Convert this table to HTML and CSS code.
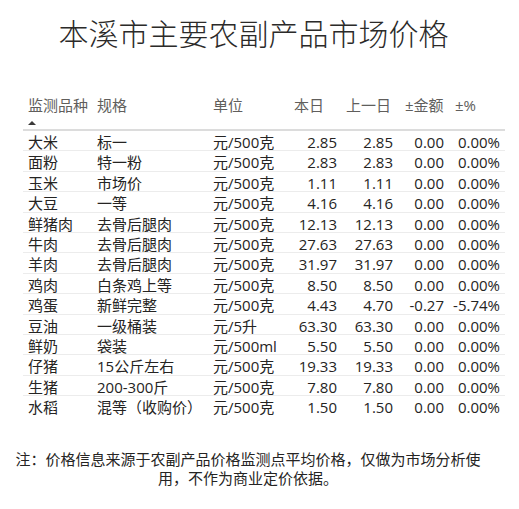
FILE: index.html
```html
<!DOCTYPE html>
<html lang="zh-CN">
<head>
<meta charset="utf-8">
<title>本溪市主要农副产品市场价格</title>
<link rel="stylesheet" href="styles.css">
</head>
<body>
<div class="page">
  <h1 class="title">本溪市主要农副产品市场价格</h1>
  <div class="grid">
    <div class="row head">
      <div class="c"><span>监测品种</span><i class="sort"></i></div>
      <div class="c">规格</div>
      <div class="c">单位</div>
      <div class="c">本日</div>
      <div class="c">上一日</div>
      <div class="c">±金额</div>
      <div class="c">±%</div>
    </div>
    <div class="row"><div class="c">大米</div><div class="c">标一</div><div class="c">元/500克</div><div class="c n n4">2.85</div><div class="c n n5">2.85</div><div class="c n n6">0.00</div><div class="c n n7">0.00%</div></div>
    <div class="row"><div class="c">面粉</div><div class="c">特一粉</div><div class="c">元/500克</div><div class="c n n4">2.83</div><div class="c n n5">2.83</div><div class="c n n6">0.00</div><div class="c n n7">0.00%</div></div>
    <div class="row"><div class="c">玉米</div><div class="c">市场价</div><div class="c">元/500克</div><div class="c n n4">1.11</div><div class="c n n5">1.11</div><div class="c n n6">0.00</div><div class="c n n7">0.00%</div></div>
    <div class="row"><div class="c">大豆</div><div class="c">一等</div><div class="c">元/500克</div><div class="c n n4">4.16</div><div class="c n n5">4.16</div><div class="c n n6">0.00</div><div class="c n n7">0.00%</div></div>
    <div class="row"><div class="c">鲜猪肉</div><div class="c">去骨后腿肉</div><div class="c">元/500克</div><div class="c n n4">12.13</div><div class="c n n5">12.13</div><div class="c n n6">0.00</div><div class="c n n7">0.00%</div></div>
    <div class="row"><div class="c">牛肉</div><div class="c">去骨后腿肉</div><div class="c">元/500克</div><div class="c n n4">27.63</div><div class="c n n5">27.63</div><div class="c n n6">0.00</div><div class="c n n7">0.00%</div></div>
    <div class="row"><div class="c">羊肉</div><div class="c">去骨后腿肉</div><div class="c">元/500克</div><div class="c n n4">31.97</div><div class="c n n5">31.97</div><div class="c n n6">0.00</div><div class="c n n7">0.00%</div></div>
    <div class="row"><div class="c">鸡肉</div><div class="c">白条鸡上等</div><div class="c">元/500克</div><div class="c n n4">8.50</div><div class="c n n5">8.50</div><div class="c n n6">0.00</div><div class="c n n7">0.00%</div></div>
    <div class="row"><div class="c">鸡蛋</div><div class="c">新鲜完整</div><div class="c">元/500克</div><div class="c n n4">4.43</div><div class="c n n5">4.70</div><div class="c n n6">-0.27</div><div class="c n n7">-5.74%</div></div>
    <div class="row"><div class="c">豆油</div><div class="c">一级桶装</div><div class="c">元/5升</div><div class="c n n4">63.30</div><div class="c n n5">63.30</div><div class="c n n6">0.00</div><div class="c n n7">0.00%</div></div>
    <div class="row"><div class="c">鲜奶</div><div class="c">袋装</div><div class="c">元/500ml</div><div class="c n n4">5.50</div><div class="c n n5">5.50</div><div class="c n n6">0.00</div><div class="c n n7">0.00%</div></div>
    <div class="row"><div class="c">仔猪</div><div class="c">15公斤左右</div><div class="c">元/500克</div><div class="c n n4">19.33</div><div class="c n n5">19.33</div><div class="c n n6">0.00</div><div class="c n n7">0.00%</div></div>
    <div class="row"><div class="c">生猪</div><div class="c">200-300斤</div><div class="c">元/500克</div><div class="c n n4">7.80</div><div class="c n n5">7.80</div><div class="c n n6">0.00</div><div class="c n n7">0.00%</div></div>
    <div class="row last"><div class="c">水稻</div><div class="c">混等（收购价）</div><div class="c">元/500克</div><div class="c n n4">1.50</div><div class="c n n5">1.50</div><div class="c n n6">0.00</div><div class="c n n7">0.00%</div></div>
  </div>
  <p class="note">注：价格信息来源于农副产品价格监测点平均价格，仅做为市场分析使用，不作为商业定价依据。</p>
</div>
</body>
</html>
```

FILE: styles.css
```css
html, body {
  margin: 0;
  padding: 0;
  background: #ffffff;
}

body {
  font-family: "Segoe UI", "Open Sans", "Noto Sans CJK SC", sans-serif;
  color: #252423;
  width: 519px;
  height: 509px;
  overflow: hidden;
}

.page {
  display: flex;
  flex-direction: column;
}

.title {
  margin: 16px 0 0 0;
  font-weight: 300;
  font-size: 30px;
  line-height: 32px;
  text-align: center;
  color: #2b2a29;
  padding-right: 12px;
  font-family: "Noto Sans CJK SC", sans-serif;
}

.grid {
  margin: 47px 0 0 23px;
  width: 482px;
  display: flex;
  flex-direction: column;
  font-size: 15px;
}

.row {
  display: grid;
  grid-template-columns: 69px 116px 81px 52px 59px 50px 55px;
  height: 19.4px;
  border-bottom: 1px solid #ececec;
}

.row.last {
  border-bottom: none;
}

.c {
  padding: 2px 0 0 5px;
  line-height: 19.4px;
  white-space: nowrap;
  box-sizing: border-box;
}

.head {
  height: 34px;
  border-bottom: 2px solid #dcdcdc;
  color: #605e5c;
}

.head .c {
  padding-top: 0;
  line-height: 20px;
  display: flex;
  flex-direction: column;
  align-items: flex-start;
}

.sort {
  display: block;
  width: 0;
  height: 0;
  margin-top: 6px;
  border-left: 4.5px solid transparent;
  border-right: 4.5px solid transparent;
  border-bottom: 4.5px solid #3b3a39;
}

.n {
  text-align: right;
  padding-left: 0;
}

.n4 { padding-right: 4px; }
.n5 { padding-right: 7px; }
.n6 { padding-right: 6px; }
.n7 { padding-right: 5px; }

.note {
  margin: 35px 0 0 13px;
  width: 470px;
  font-size: 15px;
  line-height: 19px;
  text-align: center;
  color: #252423;
}
```
